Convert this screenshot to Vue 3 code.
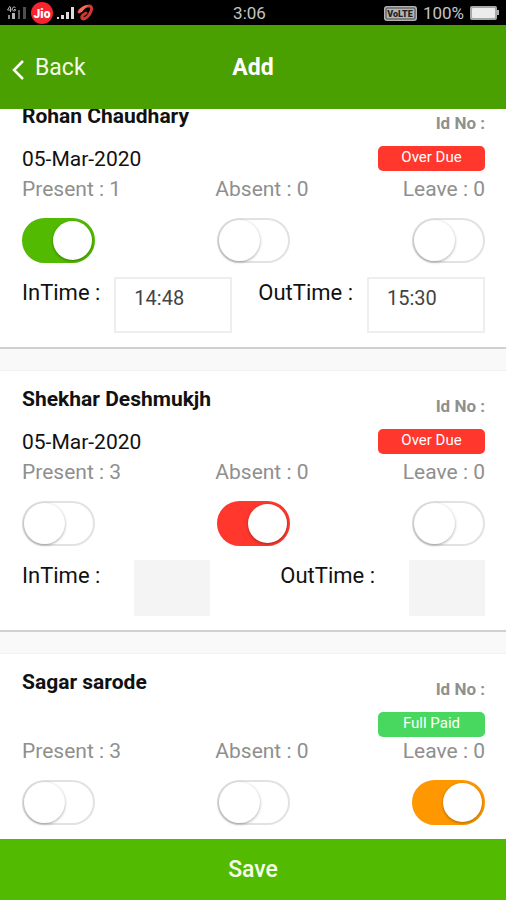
<template>
  <div class="screen">
    <div class="status-bar">
      <div class="status-side">
        <svg class="signals" width="94" height="25" viewBox="0 0 94 25" aria-hidden="true">
          <path d="M10 6 L7.500 10 H11.500 M10.500 7 V12" fill="none" stroke="#b4b4b4" stroke-width="1" />
          <path d="M15.500 7.500 A2 2 0 1 0 15.500 10.500 V9.500 H14" fill="none" stroke="#b4b4b4" stroke-width="1" />
          <rect x="8" y="15" width="2" height="4" fill="#8a8a8a" />
          <rect x="12" y="13" width="3" height="6" fill="#b4b4b4" />
          <rect x="18" y="10" width="2" height="9" fill="#5e5e5e" />
          <rect x="23" y="7" width="3" height="12" fill="#4e4e4e" />
          <circle cx="42" cy="13" r="11" fill="#f5242e" />
          <text x="42" y="18" text-anchor="middle" class="jio">Jio</text>
          <g fill="#dcdcdc">
            <rect x="57" y="17" width="2" height="2" />
            <rect x="61" y="15" width="3" height="4" />
            <rect x="66" y="12" width="3" height="7" />
            <rect x="71" y="7" width="3" height="12" />
          </g>
          <path
            d="M79 12 C81 8 86 6 89 6 C93 6 92 11 89 15 C87 18 83 20 82 18 C81 16 84 14 86 13"
            fill="none"
            stroke="#cf3a2e"
            stroke-width="3"
            stroke-linecap="round"
            stroke-linejoin="round"
          />
          <path d="M78 13 C79 8 84 5 89 5 C86 7 84 9 82 12 Z" fill="#f0705f" />
        </svg>
      </div>
      <div class="clock">3:06</div>
      <div class="status-side status-right">
        <svg width="33" height="15" viewBox="0 0 33 15" aria-hidden="true">
          <rect x="0" y="0" width="33" height="15" rx="3" fill="#b4b4b4" />
          <rect x="2" y="2" width="29" height="11" rx="1" fill="none" stroke="#444" stroke-width="1" />
          <text x="16" y="11" text-anchor="middle" class="volte">VoLTE</text>
        </svg>
        <span class="percent">100%</span>
        <svg width="29" height="14" viewBox="0 0 29 14" aria-hidden="true">
          <rect x="0" y="0" width="27" height="14" rx="2" fill="#a8a8a8" />
          <rect x="2" y="2" width="23" height="10" rx="1" fill="#ececec" />
          <rect x="27" y="4" width="2" height="5" fill="#b0b0b0" />
        </svg>
      </div>
    </div>

    <header class="toolbar">
      <button class="back" type="button">
        <svg width="13" height="20" viewBox="0 0 13 20" aria-hidden="true">
          <path d="M11 1 L2 10 L11 19" fill="none" stroke="#fff" stroke-width="2.500" />
        </svg>
        <span>Back</span>
      </button>
      <h1 class="title">Add</h1>
    </header>

    <main ref="list" class="list">
      <section class="card" v-for="m in members" :key="m.id">
        <div class="head">
          <h2 class="name">{{ m.name }}</h2>
          <span class="id-no">Id No :</span>
        </div>
        <div class="info">
          <span class="date" v-if="m.date">{{ m.date }}</span>
          <span class="badge" :class="m.paid ? 'badge-paid' : 'badge-due'">
            {{ m.paid ? 'Full Paid' : 'Over Due' }}
          </span>
        </div>
        <div class="row counts">
          <label v-for="k in kinds" :key="k.key" :for="k.key + m.id">{{ k.label }} : {{ m[k.key] }}</label>
        </div>
        <div class="row">
          <input
            v-for="k in kinds"
            :key="k.key"
            :id="k.key + m.id"
            class="toggle"
            :class="k.key"
            type="checkbox"
            :checked="m.status === k.key"
            @change="setStatus(m, k.key, $event.target.checked)"
          >
        </div>
        <div class="row times">
          <div class="field">
            <label :for="'in' + m.id">InTime :</label>
            <input :id="'in' + m.id" type="text" v-model="m.inTime" :disabled="m.status !== 'present'">
          </div>
          <div class="field">
            <label :for="'out' + m.id">OutTime :</label>
            <input :id="'out' + m.id" type="text" v-model="m.outTime" :disabled="m.status !== 'present'">
          </div>
        </div>
      </section>
    </main>

    <button class="save" type="button">Save</button>
  </div>
</template>

<script setup>
import { ref, onMounted } from 'vue'

const list = ref(null)

const kinds = [
  { key: 'present', label: 'Present' },
  { key: 'absent', label: 'Absent' },
  { key: 'leave', label: 'Leave' }
]

const members = ref([
  { id: 1, name: 'Rohan Chaudhary', date: '05-Mar-2020', paid: false, present: 1, absent: 0, leave: 0, status: 'present', inTime: '14:48', outTime: '15:30' },
  { id: 2, name: 'Shekhar Deshmukjh', date: '05-Mar-2020', paid: false, present: 3, absent: 0, leave: 0, status: 'absent', inTime: '', outTime: '' },
  { id: 3, name: 'Sagar sarode', date: '', paid: true, present: 3, absent: 0, leave: 0, status: 'leave', inTime: '', outTime: '' }
])

function setStatus(m, key, on) {
  m.status = on ? key : ''
}

onMounted(() => {
  list.value.scrollTop = 21
})
</script>

<style>
body { background: #f9f9f9; }
</style>

<style scoped>
.screen {
  display: flex;
  flex-direction: column;
  height: 100vh;
  font-family: Roboto, "Liberation Sans", sans-serif;
  color: #111;
}
.screen *, .screen *::before { box-sizing: border-box; }
button, input { font-family: inherit; }

.status-bar {
  display: flex;
  align-items: center;
  flex: none;
  height: 25px;
  padding-top: 1px;
  background: #000;
  color: #c4c4c4;
  font-size: 17px;
}
.status-side { flex: 1; display: flex; align-items: center; }
.status-right { justify-content: flex-end; gap: 6px; padding-right: 7px; }
.signals { display: block; margin-top: -1px; }
.jio { font-size: 12px; font-weight: 900; fill: #fff; }
.volte { font-size: 9px; font-weight: 900; fill: #222; }

.toolbar {
  display: grid;
  grid-template-columns: 1fr auto 1fr;
  align-items: center;
  flex: none;
  height: 84px;
  padding: 2px 12px 0;
  background: #4aa000;
  color: #fff;
}
.back {
  display: flex;
  align-items: center;
  gap: 10px;
  padding: 0;
  border: 0;
  background: none;
  color: #f4fbe9;
  font-size: 23px;
  line-height: 28px;
  cursor: pointer;
}
.back svg { margin-top: 3px; }
.title { margin: 0; font-size: 23px; line-height: 28px; font-weight: 700; }

.list {
  flex: 1;
  min-height: 0;
  overflow-y: auto;
  scrollbar-width: none;
  background: #f9f9f9;
}
.card {
  margin-bottom: 22px;
  padding: 16px 21px 14px 22px;
  background: #fff;
  border-bottom: 2px solid #d0d0d0;
  box-shadow: 0 -1px 0 #f1f1f1;
}
.head { display: flex; justify-content: space-between; height: 28px; margin-bottom: 14px; }
.name { margin: 0; font-size: 21px; line-height: 24px; font-weight: 700; }
.id-no {
  align-self: flex-end;
  font-size: 17px;
  line-height: 18px;
  font-weight: 700;
  color: #909090;
}
.info { display: flex; align-items: flex-start; }
.date { padding-bottom: 3px; font-size: 21px; line-height: 26px; }
.badge {
  width: 107px;
  height: 25px;
  margin-left: auto;
  border-radius: 5px;
  color: #fff;
  font-size: 15px;
  line-height: 22px;
  text-align: center;
}
.badge-due { background: #ff372d; }
.badge-paid { background: #48d860; }

.row { display: flex; justify-content: space-between; }
.counts {
  margin-bottom: 15px;
  color: #8f8f8f;
  font-size: 21px;
  line-height: 28px;
}

.toggle {
  appearance: none;
  width: 73px;
  height: 45px;
  margin: 0;
  border: 2px solid #e2e2e2;
  border-radius: 23px;
  background: #fff;
  cursor: pointer;
}
.toggle::before {
  content: "";
  display: block;
  width: 41px;
  height: 41px;
  border-radius: 50%;
  background: #fff;
  box-shadow: 0 1px 3px rgba(0, 0, 0, 0.35);
}
.toggle:checked { padding: 1px; }
.toggle:checked::before {
  width: 39px;
  height: 39px;
  margin-left: auto;
}
.present:checked { background: #52ba00; border-color: #52ba00; }
.absent:checked { background: #ff372d; border-color: #ff372d; }
.leave:checked { background: #ff9800; border-color: #ff9800; }

.times { margin-top: 14px; }
.field { display: flex; align-items: flex-start; gap: 14px; font-size: 22px; line-height: 32px; }
.field input {
  width: 118px;
  height: 56px;
  padding: 0 10px 14px 18px;
  border: 2px solid #eee;
  border-radius: 0;
  background: #fff;
  color: #444;
  font-size: 20px;
}
.field input:disabled {
  width: 76px;
  margin-left: 20px;
  border-color: #f4f4f4;
  background: #f4f4f4;
}

.save {
  flex: none;
  height: 61px;
  padding: 0;
  border: 0;
  background: #52ba00;
  color: #f6ffe8;
  font-size: 23px;
  font-weight: 500;
  cursor: pointer;
}
</style>
